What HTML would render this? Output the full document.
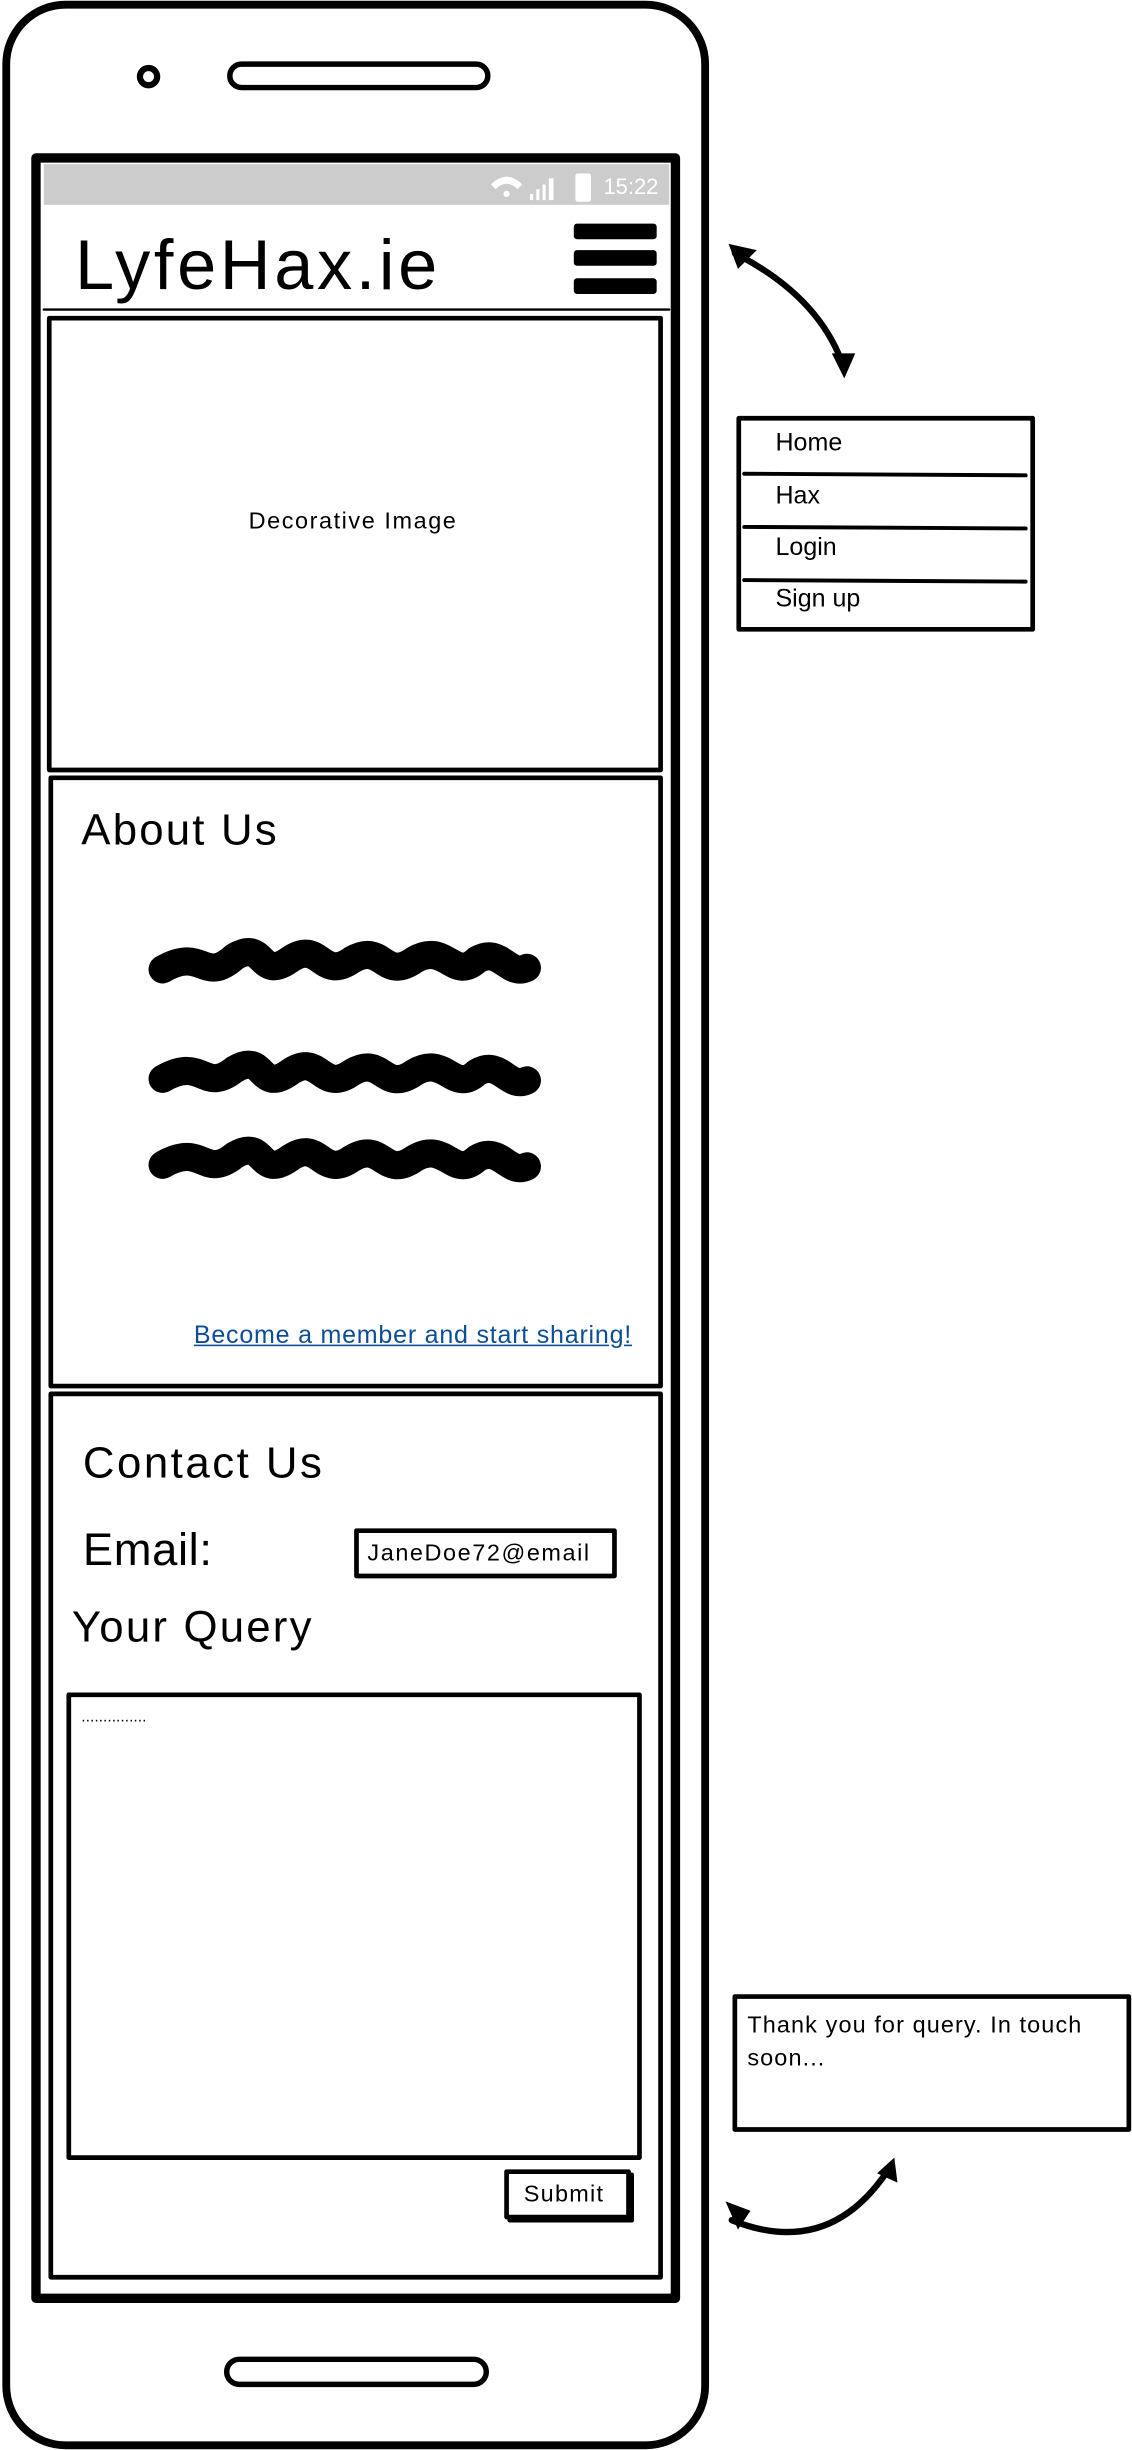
<!DOCTYPE html>
<html><head><meta charset="utf-8"><style>
html,body{margin:0;padding:0;background:#fff;width:1132px;height:2450px;overflow:hidden}
#w{position:absolute;left:0;top:0;width:724px;height:1567px;transform:scale(1.5635);transform-origin:0 0;font-family:"Liberation Sans",sans-serif;color:#000}
.a{position:absolute}
.t{position:absolute;white-space:nowrap;line-height:1}
</style></head><body><div id="w">
<svg class="a" style="left:0;top:0" width="724" height="1567" viewBox="0 0 724 1567">
<g fill="none" stroke="#000" stroke-linecap="round" stroke-linejoin="round">
<rect x="4" y="3" width="447" height="1561" rx="38" stroke-width="5"/>
<circle cx="95" cy="49" r="5.5" stroke-width="4"/>
<rect x="147" y="41" width="165" height="15" rx="7.5" stroke-width="3.5"/>
<rect x="145" y="1509" width="166" height="16" rx="8" stroke-width="3.5"/>
<rect x="23" y="101" width="409" height="1369" stroke-width="6"/>
<line x1="28" y1="198" x2="428" y2="198" stroke-width="1.5"/>
<rect x="31.5" y="203.5" width="391" height="289" stroke-width="3"/>
<rect x="32.5" y="497.5" width="390" height="389" stroke-width="3"/>
<rect x="32.5" y="891.5" width="390" height="565" stroke-width="3"/>
<rect x="228" y="979" width="165" height="29" stroke-width="3"/>
<rect x="44" y="1084" width="365" height="296" stroke-width="3"/>
<rect x="324" y="1389" width="78" height="29" stroke-width="3"/>
<line x1="326" y1="1420" x2="404" y2="1420" stroke-width="3"/>
<line x1="404" y1="1391" x2="404" y2="1420" stroke-width="3"/>
<rect x="472.5" y="267.5" width="188" height="135" stroke-width="3"/>
<line x1="476" y1="303" x2="656" y2="304" stroke-width="2.5"/>
<line x1="476" y1="337" x2="656" y2="338" stroke-width="2.5"/>
<line x1="476" y1="371" x2="656" y2="372" stroke-width="2.5"/>
<rect x="470" y="1277" width="252" height="85" stroke-width="3"/>
<path d="M470 162 Q525 190 540 236" stroke-width="4"/>
<path d="M468 1420 Q530 1445 568 1388" stroke-width="4"/>
<g stroke-width="18">
<path d="M104 620 C130 605 130 630 150 612 C170 600 165 628 185 614 C205 600 205 628 225 614 C245 602 245 628 265 614 C285 602 290 628 305 614 C320 605 325 625 337 619"/>
<path d="M104 690 C130 675 130 700 150 684 C170 672 165 700 185 686 C205 672 205 700 225 686 C245 674 245 700 265 686 C285 674 290 700 305 686 C320 677 325 697 337 691"/>
<path d="M104 745 C130 730 130 755 150 739 C170 727 165 755 185 741 C205 727 205 755 225 741 C245 729 245 755 265 741 C285 729 290 755 305 741 C320 732 325 752 337 746"/>
</g>
</g>
<rect x="28" y="105" width="400" height="26" fill="#ccc"/>
<g fill="#000">
<rect x="367" y="143" width="53" height="10" rx="2"/>
<rect x="367" y="160" width="53" height="10" rx="2"/>
<rect x="367" y="178" width="53" height="10" rx="2"/>
<path d="M466 156 L484 160 L472 172 Z"/>
<path d="M532 226 L547 226 L540 242 Z"/>
<path d="M464 1408 L480 1414 L472 1426 Z"/>
<path d="M561 1390 L572 1380 L574 1396 Z"/>
</g>
<g fill="#fff">
<path d="M314 118 Q324 108 334 118 L331 121 Q324 114 317 121Z"/><circle cx="324" cy="124" r="2"/>
<rect x="339" y="124" width="2" height="4"/><rect x="343" y="121" width="2" height="7"/><rect x="347" y="118" width="2" height="10"/><rect x="351" y="114" width="3" height="14"/>
<rect x="368" y="111" width="10" height="18" rx="1.5"/>
</g>
</svg>
<div class="t" style="left:386px;top:112px;font-size:14px;color:#fff">15:22</div>
<div class="t" style="left:48px;top:147px;font-size:45px;letter-spacing:2.3px">LyfeHax.ie</div>
<div class="t" style="left:159px;top:326px;font-size:15px;letter-spacing:1px">Decorative Image</div>
<div class="t" style="left:52px;top:517px;font-size:28px;letter-spacing:1.4px">About Us</div>
<div class="t" style="left:124px;top:847px;font-size:16px;letter-spacing:0.5px;color:#0b4e97;text-decoration:underline">Become a member and start sharing!</div>
<div class="t" style="left:53px;top:922px;font-size:28px;letter-spacing:1.6px">Contact Us</div>
<div class="t" style="left:53px;top:978px;font-size:29px;letter-spacing:0.4px">Email:</div>
<div class="t" style="left:235px;top:986px;font-size:15px;letter-spacing:1px">JaneDoe72@email</div>
<div class="t" style="left:46px;top:1027px;font-size:28px;letter-spacing:1.4px">Your Query</div>
<div class="t" style="left:52px;top:1094px;font-size:10px">...............</div>
<div class="t" style="left:335px;top:1396px;font-size:15px;letter-spacing:0.8px">Submit</div>
<div class="t" style="left:496px;top:276px;font-size:16px">Home</div>
<div class="t" style="left:496px;top:310px;font-size:16px">Hax</div>
<div class="t" style="left:496px;top:343px;font-size:16px">Login</div>
<div class="t" style="left:496px;top:376px;font-size:16px">Sign up</div>
<div class="t" style="left:478px;top:1285px;font-size:15px;line-height:21px;letter-spacing:0.7px">Thank you for query. In touch<br>soon...</div>
</div></body></html>
